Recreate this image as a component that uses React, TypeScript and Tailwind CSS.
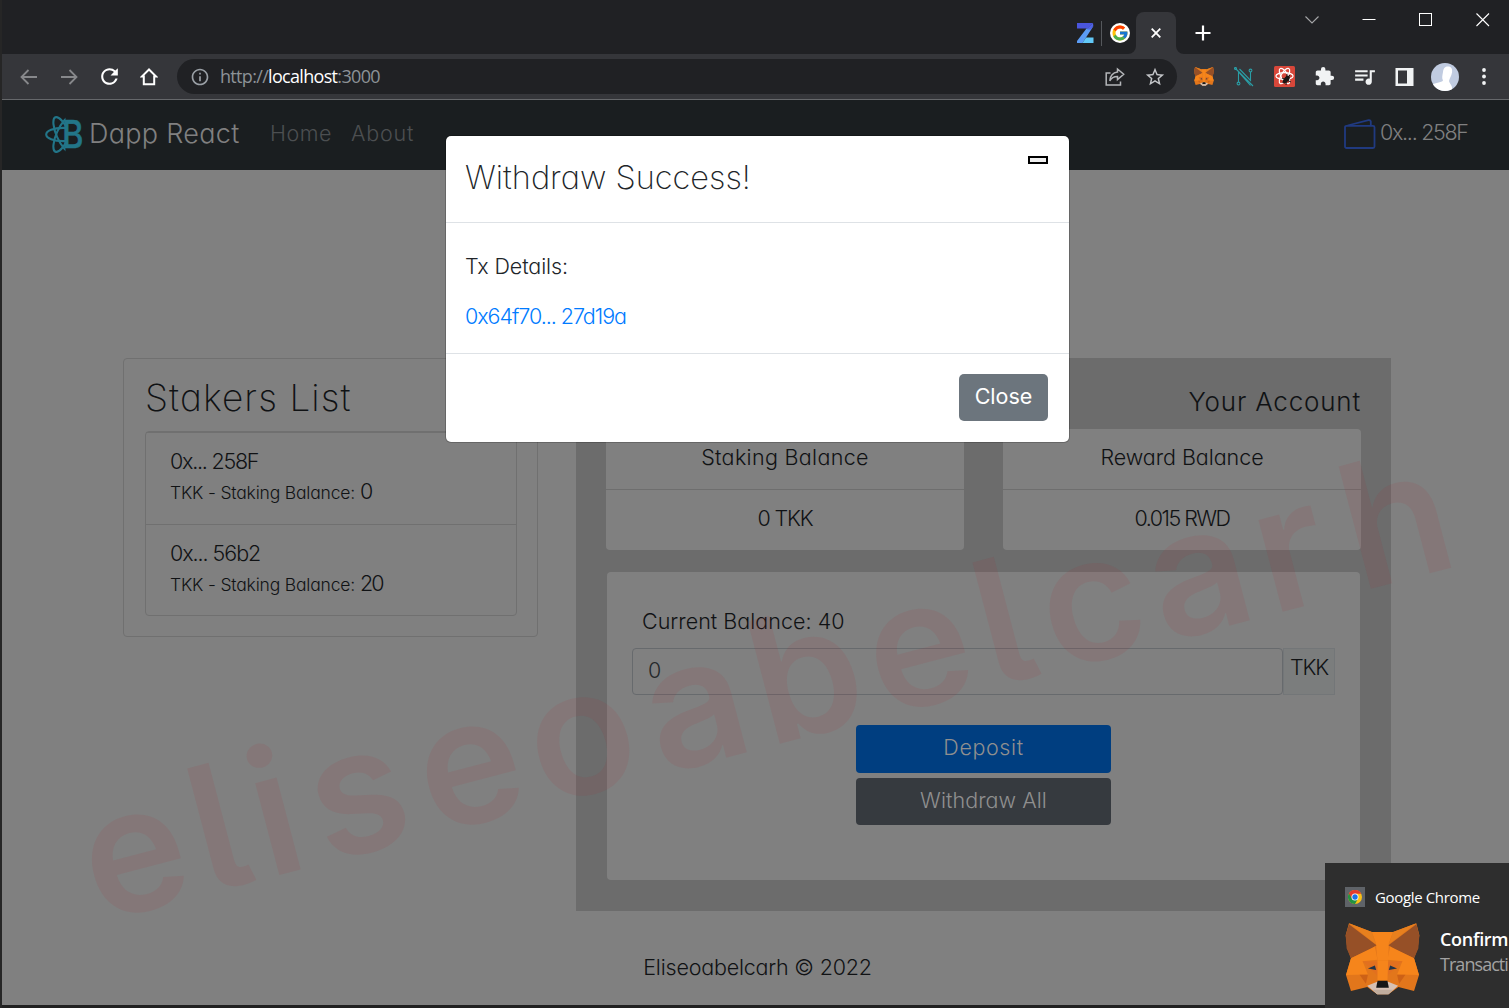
import React from 'react';
import { MdExtension, MdInfoOutline, MdQueueMusic, MdRefresh, MdStarBorder } from 'react-icons/md';
import { FcGoogle } from 'react-icons/fc';

function Fox({ className }: { className: string }) {
  return (
    <svg className={className} viewBox="75 189 226 217" preserveAspectRatio="none">
      <path d="M87 190L156 216H220L290 190L299 226L294 266L283 295L298 346L283 394L236 382L206 404H172L142 382L93 394L78 346L93 295L82 266L77 226Z" fill="#e2761b" />
      <path d="M156 216H220L207 250L205 303H173L168 250Z" fill="#f6851b" />
      <path d="M87 190L156 216L168 253ZM290 190L220 216L207 253Z" fill="#e8801e" />
      <path d="M87 193L170 256L152 268L93 295L80 266L77 226ZM290 193L206 256L224 268L283 295L296 266L299 226Z" fill="#965027" />
      <path d="M93 295L165 260L173 300L128 304L144 344L78 346ZM283 295L211 260L203 300L248 304L232 344L298 346Z" fill="#f6851b" />
      <path d="M128 304L173 306L180 362L170 345ZM248 304L203 306L196 362L206 345Z" fill="#e2701f" />
      <path d="M173 303H205L203 363H173Z" fill="#f6851b" />
      <path d="M119 345H144L138 372ZM257 345H232L238 372Z" fill="#cd6116" />
      <path d="M144 326L165 317L169 331ZM232 326L211 317L207 331Z" fill="#233447" />
      <path d="M142 378L172 366H205L235 378L206 404H172Z" fill="#d7c1b3" />
      <path d="M158 390H219L206 404H172Z" fill="#c0ad9e" />
      <path d="M173 363H203L207 384H169Z" fill="#161616" />
    </svg>
  );
}

function BrandLogo() {
  return (
    <svg className="h-[37px] w-[37px] shrink-0 overflow-visible" viewBox="0 0 37 37">
      <defs>
        <clipPath id="half"><rect x="0" y="0" width="20.5" height="37" /></clipPath>
      </defs>
      <g clipPath="url(#half)" fill="none" stroke="#227588" strokeWidth="2.1">
        <ellipse cx="18" cy="18.5" rx="16.8" ry="6.6" />
        <ellipse cx="18" cy="18.5" rx="18.8" ry="6.4" transform="rotate(66 18 18.5)" />
        <ellipse cx="18" cy="18.5" rx="18.8" ry="6.4" transform="rotate(-66 18 18.5)" />
      </g>
      <text x="17" y="32.2" fontSize="38" fontWeight="500" fontFamily="Inter, sans-serif" fill="#227588" stroke="#227588" strokeWidth=".5" textLength="21.5" lengthAdjust="spacingAndGlyphs">B</text>
    </svg>
  );
}

function ChromeLogo() {
  return (
    <svg className="h-[14px] w-[14px]" viewBox="0 0 24 24">
      <circle cx="12" cy="12" r="12" fill="#fbc116" />
      <path d="M12 12L1.6 6A12 12 0 0 0 12 24L17.2 15Z" fill="#229342" />
      <path d="M12 6.5H22.7A12 12 0 0 0 1.6 6L7 15Z" fill="#e33b2e" />
      <circle cx="12" cy="12" r="6" fill="#fff" />
      <circle cx="12" cy="12" r="4.6" fill="#1a73e8" />
    </svg>
  );
}

function TitleBar() {
  return (
    <div className="flex h-[54px] items-start bg-[#202124]">
      <div className="flex h-[42px] w-[1134px] shrink-0 items-center justify-end pt-6">
        <svg className="mr-[7px] h-[20px] w-[17px]" viewBox="0 0 17 20">
          <path d="M0 0H16L11 5.5H0Z" fill="#4a55dd" />
          <path d="M9.500 5.500H14L16.500 3L9 14.500L5.500 20H0V18Z" fill="#5b9cf5" />
          <path d="M16 0L16.300 3L14 6.500H10L11 5Z" fill="#4f63e6" />
          <path d="M9 14.500H16.500V20H5.500Z" fill="#62c9f7" />
        </svg>
        <div className="mr-2 h-[25px] w-px bg-[#55585c]" />
        <div className="mr-1.5 flex size-5 items-center justify-center rounded-full bg-white"><FcGoogle className="size-[18px]" /></div>
      </div>
      <div className="relative mt-3 flex h-[42px] w-10 shrink-0 items-center justify-center rounded-t-[8px] bg-[#35363a]">
        <svg className="absolute -left-2 bottom-0 size-2" viewBox="0 0 8 8"><path d="M8 0V8H0A8 8 0 0 0 8 0Z" fill="#35363a" /></svg>
        <svg className="absolute -right-2 bottom-0 size-2" viewBox="0 0 8 8"><path d="M0 0V8H8A8 8 0 0 1 0 0Z" fill="#35363a" /></svg>
        <svg className="h-[10px] w-[10px]" viewBox="0 0 10 10"><path d="M.7 .7L9.3 9.3M9.3 .7L.7 9.3" stroke="#fff" strokeWidth="1.8" /></svg>
      </div>
      <svg className="ml-[19px] mt-[25px] size-4" viewBox="0 0 16 16"><path d="M8 .5V15.5M.5 8H15.5" stroke="#fff" strokeWidth="2.2" /></svg>
      <div className="ml-[94px] flex w-[185px] items-center justify-between pt-[13px]">
        <svg className="size-[14px]" viewBox="0 0 14 14"><path d="M.5 3.5L7 10L13.5 3.5" fill="none" stroke="#a6a7a9" strokeWidth="1.1" /></svg>
        <svg className="size-[14px]" viewBox="0 0 14 14"><path d="M.5 6.5H13.5" stroke="#fff" /></svg>
        <svg className="size-[14px]" viewBox="0 0 14 14"><rect x=".5" y=".5" width="12" height="12" fill="none" stroke="#fff" /></svg>
        <svg className="size-[14px]" viewBox="0 0 14 14"><path d="M.5 .5L13 13M13 .5L.5 13" stroke="#fff" strokeWidth="1.1" /></svg>
      </div>
    </div>
  );
}

function Slot({ children }: { children: React.ReactNode }) {
  return <div className="flex w-10 shrink-0 items-center justify-center">{children}</div>;
}

function Toolbar() {
  return (
    <div className="flex h-[46px] items-center border-b border-[#66686b] bg-[#35363a] pl-[7px]">
      <Slot><svg className="h-4 w-[18px]" viewBox="0 0 18 16"><path d="M17 8H2M8.5 1L1.5 8L8.5 15" fill="none" stroke="#87888b" strokeWidth="1.8" /></svg></Slot>
      <Slot><svg className="h-4 w-[18px]" viewBox="0 0 18 16"><path d="M1 8H16M9.5 1L16.5 8L9.5 15" fill="none" stroke="#87888b" strokeWidth="1.8" /></svg></Slot>
      <Slot><MdRefresh className="size-[25px] text-white" /></Slot>
      <Slot><svg className="size-[18px]" viewBox="0 0 18 18"><path d="M9 1.5L1.8 8.6H3.8V16.3H14.2V8.6H16.2Z" fill="none" stroke="#fff" strokeWidth="2" /></svg></Slot>
      <div className="ml-2 flex h-[35px] w-[1000px] shrink-0 items-center rounded-full bg-[#202124] pl-[13px]">
        <MdInfoOutline className="size-[20px] text-[#9aa0a6]" />
        <span className="ml-[10px] font-['Open_Sans'] text-[18px] font-normal tracking-[-0.68px] text-[#8d9297]">http://<span className="text-white">localhost</span>:3000</span>
        <div className="ml-auto flex pr-[2px]">
          <Slot>
            <svg className="size-5" viewBox="0 0 20 20" fill="none" stroke="#b4b6b9" strokeWidth="1.5">
              <path d="M5.5 6H1.2V18H15.5V14.5" />
              <path d="M12.5 2L18.7 7.2L12.5 12.5V9.5C8.5 9.5 6.2 11 4.8 13.8C5.2 9 8 5.6 12.5 5Z" />
            </svg>
          </Slot>
          <Slot><MdStarBorder className="size-[22px] text-[#c4c6c9]" /></Slot>
        </div>
      </div>
      <div className="ml-[7px] flex items-center">
        <Slot><Fox className="h-[19px] w-5" /></Slot>
        <Slot>
          <svg className="size-5" viewBox="0 0 20 20" fill="none" stroke="#2a9ea6" strokeWidth="1.1">
            <path d="M4.5 15V5L16.5 18.5M1.5 1.5L19 19M5.5 2L16.5 13.5V5" />
            <circle cx="4.5" cy="16.5" r="1.4" /><circle cx="16.5" cy="3.5" r="1.4" /><circle cx="1.5" cy="1.5" r="1" />
          </svg>
        </Slot>
        <Slot>
          <svg className="size-[21px]" viewBox="0 0 21 21">
            <rect width="21" height="21" rx="1.5" fill="#d8473a" />
            <g fill="none" stroke="#fff" strokeWidth="1.2">
              <ellipse cx="10.5" cy="10" rx="8.6" ry="3.4" />
              <ellipse cx="10.5" cy="10" rx="8.6" ry="3.4" transform="rotate(60 10.5 10)" />
              <ellipse cx="10.5" cy="10" rx="8.6" ry="3.4" transform="rotate(120 10.5 10)" />
            </g>
            <ellipse cx="12.3" cy="13.5" rx="2.4" ry="4.600" transform="rotate(40 12.3 13.5)" fill="#1c1412" />
            <path d="M8 12L17 16M8.5 17L16 9M13 8L12 19" stroke="#1c1412" />
          </svg>
        </Slot>
        <Slot><MdExtension className="size-[21px] text-[#f1f3f4]" /></Slot>
        <Slot><MdQueueMusic className="size-[25px] text-[#f1f3f4]" /></Slot>
        <Slot><svg className="h-[18px] w-[19px]" viewBox="0 0 19 18"><path d="M.5 0H18.5V18H.5ZM3 2.5V15.5H12V2.5Z" fillRule="evenodd" fill="#f1f3f4" /></svg></Slot>
        <Slot>
          <svg className="ml-0.5 size-7" viewBox="0 0 28 28">
            <defs><clipPath id="face"><circle cx="14" cy="14" r="14" /></clipPath></defs>
            <g clipPath="url(#face)">
              <rect width="28" height="28" fill="#c0cbe0" />
              <path d="M0 23C3 19 11 20 12 17.500C10.500 15 11.500 12 12 9C12.500 5 14 3.500 17 3.500C20.500 3.500 21.500 6 21 9.500C20.500 13 18.500 15 18 18C18.500 21 22 22 21 28H0Z" fill="#fff" />
            </g>
          </svg>
        </Slot>
        <Slot><svg className="h-[17px] w-1" viewBox="0 0 4 17" fill="#f1f3f4"><circle cx="2" cy="2" r="1.9" /><circle cx="2" cy="8.5" r="1.9" /><circle cx="2" cy="15" r="1.9" /></svg></Slot>
      </div>
    </div>
  );
}

function NavBar() {
  return (
    <nav className="flex h-[70px] items-start bg-[#1a1e20] pl-[43px] pt-4">
      <BrandLogo />
      <div className="ml-[7px] w-[180px] text-[27px] leading-[35px] tracking-[0.3px] text-[#808080]">Dapp React</div>
      <div className="ml-[1px] w-[81px] text-[21.5px] leading-[35px] tracking-[0.5px] text-[#4c4f51]">Home</div>
      <div className="text-[21.5px] leading-[35px] tracking-[0.8px] text-[#4c4f51]">About</div>
      <div className="ml-auto flex pr-10">
        <svg className="mt-[3px] h-[30px] w-8" viewBox="0 0 32 30" fill="none" stroke="#203a80" strokeWidth="1.8">
          <rect x="1" y="6.8" width="29.5" height="22.2" rx="1.5" />
          <path d="M3.5 6.5L24.5 1.1Q26.5 .8 26.8 2.5V6.5" />
        </svg>
        <div className="ml-[4px] w-[89px] whitespace-nowrap text-[21.5px] leading-[33px] tracking-[-1.3px] text-[#808080]">0x... 258F</div>
      </div>
    </nav>
  );
}

function Staker({ id, idClass, amount }: { id: string; idClass: string; amount: string }) {
  return (
    <div className="h-[92px] border-t border-[#707070] pl-[24px] pt-3">
      <div className={`text-[21.5px] leading-[32px] ${idClass}`}>{id}</div>
      <div className="flex items-baseline leading-[29px]">
        <span className="w-[190px] text-[17.5px] tracking-[-0.18px]">TKK - Staking Balance:</span>
        <span className="text-[21.5px] tracking-[-2px]">{amount}</span>
      </div>
    </div>
  );
}

function StakersCard() {
  return (
    <section className="h-[279px] w-[415px] rounded border border-[#707070] px-[21px] pt-[19px]">
      <h2 className="text-[37px] font-extralight leading-10 tracking-[1.1px]">Stakers List</h2>
      <div className="mt-[13px] h-[185px] w-[372px] rounded border border-[#707070]">
        <Staker id="0x... 258F" idClass="tracking-[-1.25px]" amount="0" />
        <Staker id="0x... 56b2" idClass="tracking-[-1.06px]" amount="20" />
      </div>
    </section>
  );
}

function BalanceCard({ title, titleClass, value, valueClass }: { title: string; titleClass: string; value: string; valueClass: string }) {
  return (
    <div className="h-[121px] w-[358px] rounded bg-[#808080] text-center text-[21.5px]">
      <div className={`h-[61px] border-b border-[#6e6e6e] leading-[57px] ${titleClass}`}>{title}</div>
      <div className={`leading-[57px] ${valueClass}`}>{value}</div>
    </div>
  );
}

function AccountPanel() {
  return (
    <section className="h-[553px] w-[815px] bg-[#6c6c6c] px-[30px] pt-[23px]">
      <h3 className="h-12 text-right text-[26px] leading-[42px] tracking-[0.8px]">Your Account</h3>
      <div className="flex justify-between">
        <BalanceCard title="Staking Balance" titleClass="tracking-[0.33px]" value="0 TKK" valueClass="tracking-[-1.2px] word-spacing-[2px]" />
        <BalanceCard title="Reward Balance" titleClass="tracking-[-0.05px]" value="0.015 RWD" valueClass="tracking-[-1.5px]" />
      </div>
      <div className="mx-px mt-[22px] h-[308px] rounded bg-[#808080] px-[25px] pt-[34px] text-[21.5px]">
        <div className="pl-[10px] leading-[31px] tracking-[0.02px]">Current Balance: 40</div>
        <div className="mt-[11px] flex h-[47px]">
          <div className="w-[651px] rounded border border-[#676a6d] pl-[15px] leading-[43px] text-[#25282b]">0</div>
          <div className="w-[52px] border border-[#737678] bg-[#7b7d7d] text-center leading-[37px] tracking-[-1.2px]">TKK</div>
        </div>
        <div className="mt-[30px] flex flex-col items-center gap-[5px] text-[#8f8f8f]">
          <button className="h-12 w-[255px] rounded bg-[#003e80] pb-[3px] tracking-[0.6px]">Deposit</button>
          <button className="h-[47px] w-[255px] rounded bg-[#363a3f] pb-[3px] tracking-[0.05px]">Withdraw All</button>
        </div>
      </div>
    </section>
  );
}

function Watermark() {
  return (
    <svg className="pointer-events-none absolute left-0 top-0 h-[1008px] w-[1509px]" viewBox="0 0 1509 1008">
      <text
        transform="translate(103 912) rotate(-14.7)"
        x="44.6 132 191 276 391 506.5 625 740 855.5 944 1034 1145 1240 1350"
        y="9"
        textAnchor="middle"
        fontFamily="Inter, sans-serif"
        fontSize="174"
        fontWeight="600"
        fill="rgb(178 38 45 / 0.09)"
        className="[font-feature-settings:'cv05']"
      >
        eliseoabelcarh
      </text>
    </svg>
  );
}

function Modal() {
  return (
    <div className="absolute left-[446px] top-[136px] h-[306px] w-[623px] rounded-[5px] bg-white text-[21.5px] text-[#212529] shadow-[0_0_0_1px_rgba(0,0,0,0.2)]">
      <div className="flex h-[87px] items-start justify-between border-b border-[#dee2e6] pl-[19px] pr-5 pt-5">
        <h4 className="mt-px text-[32.5px] font-extralight leading-[42px] tracking-[0px]">Withdraw Success!</h4>
        <button className="mr-[1px] h-2 w-5 border-2 border-black bg-[#efefef]" />
      </div>
      <div className="h-[131px] border-b border-[#dee2e6] px-[19px] pt-[28px]">
        <div className="leading-[30px] tracking-[-0.1px]">Tx Details:</div>
        <div className="mt-5 leading-[30px] tracking-[-1.04px] text-[#007bff]">0x64f70... 27d19a</div>
      </div>
      <div className="flex justify-end pr-[21px] pt-5">
        <button className="h-[47px] w-[89px] rounded-[5px] bg-[#6c757d] pb-[2px] font-normal text-white">Close</button>
      </div>
    </div>
  );
}

function Toast() {
  return (
    <div className="absolute left-[1325px] top-[863px] h-[145px] w-[184px] overflow-hidden whitespace-nowrap bg-[#2e2e2e] pl-5 pt-6 font-['Open_Sans'] font-normal">
      <div className="flex items-center">
        <div className="flex size-5 items-center justify-center bg-[#5f6368]"><ChromeLogo /></div>
        <span className="ml-[10px] text-[15px] leading-[18px] tracking-[-0.35px] text-white">Google Chrome</span>
      </div>
      <div className="mt-4 flex">
        <Fox className="h-[72px] w-[75px] shrink-0" />
        <div className="ml-5 mt-1 text-[18px] leading-[25px]">
          <div className="font-semibold tracking-[-0.3px] text-white">Confirm</div>
          <div className="tracking-[-0.95px] text-[#a2a2a2]">Transacti</div>
        </div>
      </div>
    </div>
  );
}

export default function App() {
  return (
    <div className="relative h-[1008px] w-[1509px] overflow-hidden border-l-2 border-[#262626] bg-[#202020] font-['Inter'] font-light text-[#101214] [font-feature-settings:'cv11']">
      <TitleBar />
      <Toolbar />
      <NavBar />
      <main className="h-[835px] bg-[#808080] pt-[188px]">
        <div className="flex justify-between pl-[121px] pr-[118px]">
          <StakersCard />
          <AccountPanel />
        </div>
        <footer className="mt-[41px] pl-1 text-center text-[21.5px] leading-[30px] tracking-[-0.2px]">Eliseoabelcarh © 2022</footer>
      </main>
      <div className="absolute -left-0.5 top-0"><Watermark /><Modal /><Toast /></div>
    </div>
  );
}
